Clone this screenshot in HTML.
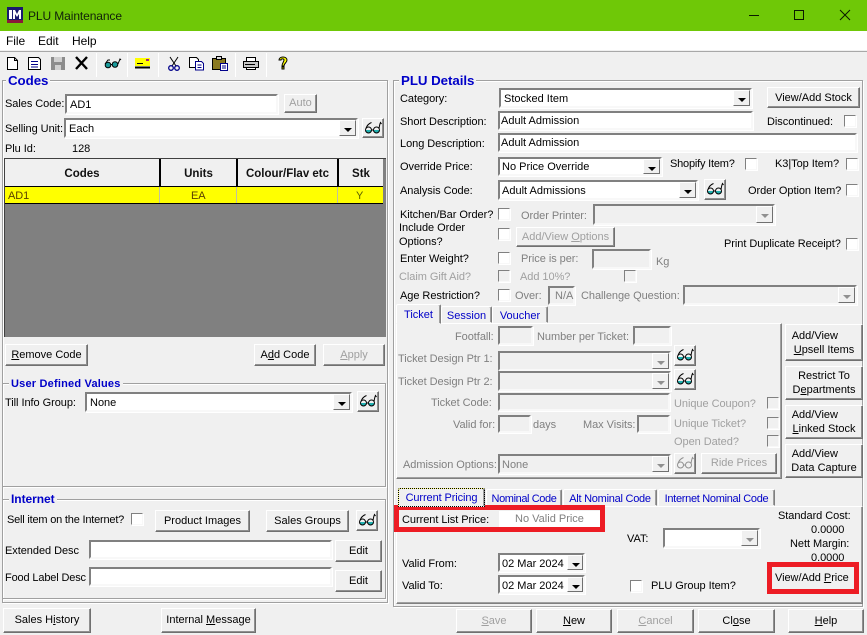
<!DOCTYPE html>
<html><head><meta charset="utf-8"><title>PLU Maintenance</title>
<style>
html,body{margin:0;padding:0}
#r{position:relative;width:867px;height:635px;overflow:hidden;background:#f0f0f0;font:11px/14px "Liberation Sans",sans-serif;color:#000}
#r *{box-sizing:border-box}
#r div,#r span.t,#r svg{position:absolute}
.t{white-space:nowrap;position:absolute;margin-top:1px;letter-spacing:-.05px}
.t.bl{margin-top:0}
.g{color:#808080}
.bl{color:#0000c8}
.i{background:#fff;border:2px solid;border-color:#808080 #f8f8f8 #f8f8f8 #808080;padding:0 0 0 3px;line-height:19px;white-space:nowrap;box-shadow:1px 1px 0 #fff}
.l17{line-height:17px}
.d{background:#f0f0f0;color:#808080}
.b{background:#f0f0f0;border:1px solid;border-color:#fff #707070 #707070 #fff;box-shadow:inset -1px -1px 0 #909090;text-align:center;white-space:nowrap}
.b u{text-underline-offset:1px}
.ar{right:0;top:0;bottom:0;width:17px;background:#f0f0f0;border:1px solid;border-color:#fff #707070 #707070 #fff}
.ar:after{content:"";position:absolute;left:4px;top:7px;border:4px solid transparent;border-top:4px solid #000;border-bottom:0}
.ar.x:after{border-top-color:#909090}
.c{width:12px;height:12px;background:#fff;border:1px solid;border-color:#808080 #f8f8f8 #f8f8f8 #808080;box-shadow:1px 1px 0 #fff}
.c.d{background:#f0f0f0}
.f{border:1px solid #a0a0a0;box-shadow:inset 1px 1px 0 #fff,1px 1px 0 #fff}
.p{background:#f0f0f0;border:1px solid;border-color:#fff #808080 #808080 #fff;box-shadow:inset -1px -1px 0 #a0a0a0}
.tb{background:#f0f0f0;border:1px solid;border-color:#fff #808080 #f0f0f0 #fff;border-radius:2px 2px 0 0;text-align:center;color:#0000c8;white-space:nowrap;box-shadow:inset -1px 0 0 #a0a0a0}
.h{font-weight:bold;text-align:center;background:#f0f0f0;color:#111;border-right:2px solid #000;top:159px;height:27px;line-height:30px;font-size:11.5px}
.s{width:1px;height:24px;top:53px;background:#a0a0a0;border-right:1px solid #fff}
.red{border:5px solid #ed1c24}
</style></head><body><div id="r">

<!-- title -->
<div style="left:0;top:0;width:867px;height:31px;background:#6fc807"></div>
<svg style="left:7px;top:7px" width="16" height="16" viewBox="0 0 16 16"><rect width="16" height="16" fill="#1a1a6e"/><rect y="13" width="16" height="3" fill="#8a1a3a"/><path d="M2 3h3v9H2zM6 12V3h2l2 4 2-4h2v9h-2V7l-2 3-2-3v5z" fill="#fff"/></svg>
<span class="t" style="left:28px;top:9px;font-size:12px;margin-top:0;letter-spacing:-.1px;color:#10210a">PLU Maintenance</span>
<svg style="left:740px;top:8px" width="120" height="16" viewBox="0 0 120 16" fill="none" stroke="#0a1a00" stroke-width="1"><path d="M9 7.500h10"/><path d="M54.500 2.500h9v9h-9z"/><path d="M100 2l10 10M110 2l-10 10"/></svg>

<!-- menu -->
<div style="left:0;top:31px;width:867px;height:19px;background:#fff"></div>
<span class="t" style="left:6px;top:33px;font-size:12px">File</span>
<span class="t" style="left:38px;top:33px;font-size:12px">Edit</span>
<span class="t" style="left:72px;top:33px;font-size:12px">Help</span>
<div style="left:0;top:51px;width:867px;height:1px;background:#a8a8a8"></div>

<!-- toolbar -->
<svg style="left:0;top:52px" width="300" height="24" viewBox="0 0 300 24" fill="none" stroke="#000">
<path d="M7.500 5.500h7l3 3v9h-10z" fill="#fff"/><path d="M14.500 5.500v3h3"/>
<path d="M28.500 5.500h10l2 2v10h-12z" fill="#fff"/><path d="M31 9.500h7M31 12.500h7M31 15h7" stroke="#00008a"/>
<path d="M51 5h14v13H51z" fill="#8c8c8c" stroke="none"/><path d="M54 5h8v5h-8z" fill="#d0d0d0" stroke="none"/><path d="M55 13h6v5h-6z" fill="#d0d0d0" stroke="none"/>
<path d="M76 5l11 12M87 5L76 17" stroke-width="2.400"/>
<circle cx="108" cy="13" r="2.800" fill="#1a9a9a"/><circle cx="115" cy="12.500" r="2.800" fill="#1a9a9a"/><path d="M105 12l3-4h2M110.500 12.500h2M118 12l2-5 1 1"/>
<path d="M135 6h15v8h-15z" fill="#ffff00" stroke="none"/><path d="M135 15.500h15" stroke-width="2"/><path d="M137 11.500h6" /><path d="M146 7h3v2h-3z" fill="#a02080" stroke="none"/>
<path d="M170 5l6 9M178 5l-6 9" stroke="#000"/><circle cx="171" cy="16" r="2.300" stroke="#00008a" stroke-width="1.300"/><circle cx="177" cy="16" r="2.300" stroke="#00008a" stroke-width="1.300"/>
<path d="M189.500 5.500h7l2 2v8h-9z" fill="#fff"/><path d="M195.500 9.500h6l2 2v6.500h-8z" fill="#fff" stroke="#00008a"/><path d="M197.500 13h4M197.500 15.500h4" stroke="#00008a"/>
<path d="M212.500 6.500h13v11h-13z" fill="#8a7a20"/><path d="M216.500 4.500h5v3h-5z" fill="#ddd"/><path d="M220.500 11.500h7v7h-7z" fill="#fff" stroke="#00008a"/><path d="M222 14h4M222 16h4" stroke="#00008a"/>
<path d="M246.500 5.500h9v4h-9z" fill="#fff"/><path d="M243.500 9.500h15v6h-15z" fill="#c8c8c8"/><path d="M246.500 15.500h9v2h-9z" fill="#fff"/><path d="M245 12.500h10"/>
<path d="M279 8c0-4 8-4 8 0 0 3-3 3-3 6h-2c0-3 2-4 2-6 0-1.500-3-1.500-3 0zM282 15h2v2h-2z" fill="#ffff00" stroke="#000" stroke-width="1"/>
</svg>
<div class="s" style="left:96px"></div><div class="s" style="left:127px"></div><div class="s" style="left:158px"></div><div class="s" style="left:235px"></div><div class="s" style="left:266px"></div>

<!-- Codes frame -->
<div class="f" style="left:2px;top:80px;width:386px;height:523px"></div>
<span class="t bl" style="left:6px;top:73px;padding:0 2px;background:#f0f0f0;font-size:13.300px;line-height:15px;font-weight:bold">Codes</span>
<span class="t" style="left:5px;top:96px">Sales Code:</span>
<div class="i" style="left:65px;top:94px;width:213px;height:20px">AD1</div>
<div class="b g" style="left:284px;top:94px;width:33px;height:19px;line-height:17px;color:#a0a0a0">Auto</div>
<span class="t" style="left:5px;top:121px">Selling Unit:</span>
<div class="i" style="left:64px;top:118px;width:294px;height:20px">Each<div class="ar"></div></div>
<div class="b" style="left:362px;top:118px;width:22px;height:20px"></div>
<span class="t" style="left:5px;top:141px">Plu Id:</span>
<span class="t" style="left:72px;top:141px">128</span>

<div style="left:4px;top:158px;width:382px;height:179px;background:#808080;border-top:1px solid #404040;border-left:1px solid #404040"></div>
<div class="h" style="left:5px;width:156px">Codes</div>
<div class="h" style="left:161px;width:77px">Units</div>
<div class="h" style="left:238px;width:101px">Colour/Flav etc</div>
<div class="h" style="left:339px;width:44px;border-right:0">Stk</div>
<div style="left:5px;top:186px;width:378px;height:1px;background:#000"></div>
<div style="left:5px;top:187px;width:378px;height:17px;background:#ffff00;border-bottom:1px solid #000"></div>
<div style="left:159px;top:187px;width:1px;height:16px;background:#c0c0a0"></div>
<div style="left:236px;top:187px;width:1px;height:16px;background:#c0c0a0"></div>
<div style="left:337px;top:187px;width:1px;height:16px;background:#c0c0a0"></div>
<span class="t" style="left:8px;top:188px;color:#5a4000">AD1</span>
<span class="t" style="left:191px;top:188px;color:#5a4000">EA</span>
<span class="t" style="left:356px;top:188px;color:#5a6000">Y</span>

<div class="b" style="left:5px;top:344px;width:83px;height:22px;line-height:20px"><u>R</u>emove Code</div>
<div class="b" style="left:254px;top:344px;width:62px;height:22px;line-height:20px">A<u>d</u>d Code</div>
<div class="b" style="left:323px;top:344px;width:62px;height:22px;line-height:20px;color:#a0a0a0"><u>A</u>pply</div>

<div class="f" style="left:2px;top:383px;width:384px;height:104px"></div>
<span class="t bl" style="left:9px;top:377px;padding:0 2px;background:#f0f0f0;font-weight:bold;letter-spacing:.2px">User Defined Values</span>
<span class="t" style="left:5px;top:395px">Till Info Group:</span>
<div class="i" style="left:85px;top:392px;width:267px;height:20px">None<div class="ar"></div></div>
<div class="b" style="left:357px;top:391px;width:22px;height:21px"></div>

<div class="f" style="left:2px;top:499px;width:384px;height:100px"></div>
<span class="t bl" style="left:9px;top:492px;padding:0 2px;background:#f0f0f0;font-weight:bold;font-size:12px">Internet</span>
<span class="t" style="left:7px;top:512px;letter-spacing:-.2px">Sell item on the Internet?</span>
<div class="c" style="left:131px;top:513px"></div>
<div class="b" style="left:155px;top:510px;width:95px;height:22px;line-height:20px">Product Images</div>
<div class="b" style="left:266px;top:510px;width:83px;height:22px;line-height:20px">Sales Groups</div>
<div class="b" style="left:356px;top:510px;width:22px;height:21px"></div>
<span class="t" style="left:5px;top:543px">Extended Desc</span>
<div class="i" style="left:89px;top:540px;width:243px;height:19px"></div>
<div class="b" style="left:335px;top:540px;width:47px;height:22px;line-height:20px">Edit</div>
<span class="t" style="left:5px;top:570px;letter-spacing:-.15px">Food Label Desc</span>
<div class="i" style="left:89px;top:567px;width:243px;height:19px"></div>
<div class="b" style="left:335px;top:570px;width:47px;height:22px;line-height:20px">Edit</div>

<div class="b" style="left:3px;top:608px;width:88px;height:25px;line-height:23px">Sales H<u>i</u>story</div>
<div class="b" style="left:161px;top:608px;width:95px;height:25px;line-height:23px">Internal <u>M</u>essage</div>

<!-- PLU Details -->
<div class="f" style="left:393px;top:80px;width:470px;height:527px"></div>
<span class="t bl" style="left:399px;top:73px;padding:0 2px;background:#f0f0f0;font-size:13.300px;line-height:15px;font-weight:bold">PLU Details</span>

<span class="t" style="left:400px;top:91px">Category:</span>
<div class="i" style="left:499px;top:88px;width:253px;height:20px">Stocked Item<div class="ar"></div></div>
<div class="b" style="left:767px;top:87px;width:93px;height:21px;line-height:20px">View/Add Stock</div>

<span class="t" style="left:400px;top:114px">Short Description:</span>
<div class="i l17" style="left:498px;top:111px;width:255px;height:19px;padding-left:1px">Adult Admission</div>
<span class="t" style="left:767px;top:114px">Discontinued:</span>
<div class="c" style="left:844px;top:115px"></div>

<span class="t" style="left:400px;top:136px">Long Description:</span>
<div class="i l17" style="left:498px;top:133px;width:359px;height:19px;padding-left:1px">Adult Admission</div>

<span class="t" style="left:400px;top:159px">Override Price:</span>
<div class="i l17" style="left:498px;top:157px;width:164px;height:19px;padding-left:2px">No Price Override<div class="ar"></div></div>
<span class="t" style="left:670px;top:156px;letter-spacing:-.2px">Shopify Item?</span>
<div class="c" style="left:745px;top:158px"></div>
<span class="t" style="left:775px;top:156px">K3|Top Item?</span>
<div class="c" style="left:846px;top:158px"></div>

<span class="t" style="left:400px;top:183px">Analysis Code:</span>
<div class="i" style="left:498px;top:180px;width:200px;height:20px;padding-left:2px">Adult Admissions<div class="ar"></div></div>
<div class="b" style="left:704px;top:179px;width:22px;height:21px"></div>
<span class="t" style="left:748px;top:183px">Order Option Item?</span>
<div class="c" style="left:846px;top:184px"></div>

<span class="t" style="left:400px;top:207px">Kitchen/Bar Order?</span>
<div class="c" style="left:498px;top:208px"></div>
<span class="t g" style="left:521px;top:208px">Order Printer:</span>
<div class="i d" style="left:593px;top:204px;width:182px;height:21px"><div class="ar x"></div></div>

<span class="t" style="left:399px;top:220px">Include Order</span>
<span class="t" style="left:399px;top:234px">Options?</span>
<div class="c" style="left:498px;top:228px"></div>
<div class="b" style="left:516px;top:227px;width:99px;height:20px;line-height:18px;color:#a0a0a0">Add/View <u>O</u>ptions</div>
<span class="t" style="left:724px;top:236px">Print Duplicate Receipt?</span>
<div class="c" style="left:846px;top:238px"></div>

<span class="t" style="left:400px;top:251px">Enter Weight?</span>
<div class="c" style="left:498px;top:252px"></div>
<span class="t g" style="left:521px;top:251px">Price is per:</span>
<div class="i d" style="left:592px;top:249px;width:59px;height:20px"></div>
<span class="t g" style="left:656px;top:254px">Kg</span>

<span class="t" style="left:399px;top:269px;color:#a0a0a0">Claim Gift Aid?</span>
<div class="c d" style="left:498px;top:270px"></div>
<span class="t" style="left:520px;top:269px;color:#a0a0a0">Add 10%?</span>
<div class="c d" style="left:624px;top:270px"></div>

<span class="t" style="left:400px;top:288px">Age Restriction?</span>
<div class="c" style="left:498px;top:289px"></div>
<span class="t g" style="left:515px;top:288px">Over:</span>
<div class="i d l17" style="left:548px;top:286px;width:27px;height:19px;padding-left:5px">N/A</div>
<span class="t g" style="left:581px;top:288px">Challenge Question:</span>
<div class="i d" style="left:683px;top:285px;width:174px;height:20px"><div class="ar x"></div></div>

<!-- ticket tabs -->
<div class="p" style="left:396px;top:323px;width:386px;height:156px"></div>
<div class="tb" style="left:396px;top:304px;width:45px;height:20px;line-height:20px;z-index:2">Ticket</div>
<div class="tb" style="left:441px;top:306px;width:51px;height:17px;line-height:18px">Session</div>
<div class="tb" style="left:492px;top:306px;width:56px;height:17px;line-height:18px">Voucher</div>

<span class="t g" style="left:455px;top:329px">Footfall:</span>
<div class="i d" style="left:498px;top:326px;width:35px;height:19px"></div>
<span class="t g" style="left:537px;top:329px">Number per Ticket:</span>
<div class="i d" style="left:633px;top:326px;width:38px;height:19px"></div>
<span class="t g" style="left:398px;top:351px">Ticket Design Ptr 1:</span>
<div class="i d" style="left:498px;top:351px;width:173px;height:20px"><div class="ar x"></div></div>
<div class="b" style="left:674px;top:345px;width:22px;height:21px"></div>
<span class="t g" style="left:398px;top:374px">Ticket Design Ptr 2:</span>
<div class="i d" style="left:498px;top:371px;width:173px;height:20px"><div class="ar x"></div></div>
<div class="b" style="left:674px;top:369px;width:22px;height:21px"></div>
<span class="t g" style="left:431px;top:395px">Ticket Code:</span>
<div class="i d" style="left:498px;top:393px;width:172px;height:18px"></div>
<span class="t g" style="left:453px;top:417px">Valid for:</span>
<div class="i d" style="left:498px;top:415px;width:33px;height:18px"></div>
<span class="t g" style="left:533px;top:417px">days</span>
<span class="t g" style="left:583px;top:417px">Max Visits:</span>
<div class="i d" style="left:637px;top:415px;width:33px;height:18px"></div>
<span class="t" style="left:674px;top:396px;color:#a0a0a0">Unique Coupon?</span>
<div class="c d" style="left:767px;top:397px"></div>
<span class="t" style="left:674px;top:416px;color:#a0a0a0">Unique Ticket?</span>
<div class="c d" style="left:767px;top:417px"></div>
<span class="t" style="left:674px;top:434px;color:#a0a0a0">Open Dated?</span>
<div class="c d" style="left:767px;top:435px"></div>
<span class="t g" style="left:403px;top:457px">Admission Options:</span>
<div class="i d" style="left:498px;top:454px;width:173px;height:20px;padding-left:2px">None<div class="ar x"></div></div>
<div class="b" style="left:674px;top:453px;width:22px;height:21px"></div>
<div class="b" style="left:701px;top:453px;width:76px;height:21px;line-height:19px;color:#a0a0a0">Ride Prices</div>

<div class="b" style="left:785px;top:324px;width:78px;height:37px;line-height:14px;padding-top:4px">Add/View&nbsp;&nbsp;&nbsp;&nbsp;&nbsp;&nbsp;<br><u>U</u>psell Items</div>
<div class="b" style="left:785px;top:366px;width:78px;height:34px;line-height:14px;padding-top:2px">Restrict To<br>D<u>e</u>partments</div>
<div class="b" style="left:785px;top:405px;width:78px;height:34px;line-height:14px;padding-top:2px">Add/View&nbsp;&nbsp;&nbsp;&nbsp;&nbsp;&nbsp;<br><u>L</u>inked Stock</div>
<div class="b" style="left:785px;top:444px;width:78px;height:34px;line-height:14px;padding-top:2px">Add/View&nbsp;&nbsp;&nbsp;&nbsp;&nbsp;&nbsp;<br>Data Capture</div>

<!-- pricing -->
<div class="p" style="left:396px;top:506px;width:467px;height:98px"></div>
<div class="tb" style="left:398px;top:488px;width:87px;height:19px;line-height:18px;letter-spacing:-.1px;z-index:2;outline:1px dotted #000;outline-offset:-1px;border-color:#ffff80 #808080 #f0f0f0 #ffff80">Current Pricing</div>
<div class="tb" style="left:486px;top:489px;width:76px;height:17px;line-height:19px;letter-spacing:-.4px">Nominal Code</div>
<div class="tb" style="left:563px;top:489px;width:94px;height:17px;line-height:19px;letter-spacing:-.25px">Alt Nominal Code</div>
<div class="tb" style="left:658px;top:489px;width:117px;height:17px;line-height:19px;letter-spacing:-.3px">Internet Nominal Code</div>

<div class="red" style="left:394px;top:505px;width:211px;height:27px"></div>
<span class="t" style="left:402px;top:512px">Current List Price:</span>
<div style="left:499px;top:511px;width:101px;height:16px;background:#fff;text-align:center;line-height:17px;color:#808080">No Valid Price</div>

<span class="t" style="left:627px;top:531px">VAT:</span>
<div class="i" style="left:663px;top:528px;width:97px;height:20px"><div class="ar x"></div></div>
<span class="t" style="left:778px;top:508px">Standard Cost:</span>
<span class="t" style="left:811px;top:522px">0.0000</span>
<span class="t" style="left:790px;top:536px">Nett Margin:</span>
<span class="t" style="left:811px;top:550px">0.0000</span>

<span class="t" style="left:402px;top:556px">Valid From:</span>
<div class="i" style="left:498px;top:553px;width:87px;height:19px;padding-left:2px;line-height:19px">02 Mar 2024<div class="ar" style="width:16px"></div></div>
<span class="t" style="left:402px;top:578px">Valid To:</span>
<div class="i" style="left:498px;top:575px;width:87px;height:19px;padding-left:2px;line-height:19px">02 Mar 2024<div class="ar" style="width:16px"></div></div>
<div class="c" style="left:630px;top:580px"></div>
<span class="t" style="left:651px;top:578px">PLU Group Item?</span>

<div class="red" style="left:767px;top:562px;width:92px;height:32px"></div>
<span class="t" style="left:775px;top:570px">View/Add <u>P</u>rice</span>

<div class="b" style="left:456px;top:609px;width:76px;height:24px;line-height:22px;color:#a0a0a0"><u>S</u>ave</div>
<div class="b" style="left:536px;top:609px;width:76px;height:24px;line-height:22px"><u>N</u>ew</div>
<div class="b" style="left:617px;top:609px;width:77px;height:24px;line-height:22px;color:#a0a0a0"><u>C</u>ancel</div>
<div class="b" style="left:698px;top:609px;width:77px;height:24px;line-height:22px">Cl<u>o</u>se</div>
<div class="b" style="left:788px;top:609px;width:76px;height:24px;line-height:22px"><u>H</u>elp</div>

<!-- glasses icons -->
<svg style="left:364px;top:121px" width="18" height="14" viewBox="0 0 18 14" fill="none" stroke="#000"><path d="M1.500 9a3 3 0 0 0 6 0zM9.500 9a3 3 0 0 0 6 0z" fill="#20b0b0" stroke="none"/><circle cx="4.500" cy="9" r="3"/><circle cx="12.500" cy="9" r="3"/><path d="M2 7.500C3 4 5 2.500 7.500 1.500M7.500 9h2M15 7.500c.5-3 1-5 1.500-6l1 1.500"/></svg>
<svg style="left:359px;top:394px" width="18" height="14" viewBox="0 0 18 14" fill="none" stroke="#000"><path d="M1.500 9a3 3 0 0 0 6 0zM9.500 9a3 3 0 0 0 6 0z" fill="#20b0b0" stroke="none"/><circle cx="4.500" cy="9" r="3"/><circle cx="12.500" cy="9" r="3"/><path d="M2 7.500C3 4 5 2.500 7.500 1.500M7.500 9h2M15 7.500c.5-3 1-5 1.500-6l1 1.500"/></svg>
<svg style="left:358px;top:513px" width="18" height="14" viewBox="0 0 18 14" fill="none" stroke="#000"><path d="M1.500 9a3 3 0 0 0 6 0zM9.500 9a3 3 0 0 0 6 0z" fill="#20b0b0" stroke="none"/><circle cx="4.500" cy="9" r="3"/><circle cx="12.500" cy="9" r="3"/><path d="M2 7.500C3 4 5 2.500 7.500 1.500M7.500 9h2M15 7.500c.5-3 1-5 1.500-6l1 1.500"/></svg>
<svg style="left:706px;top:182px" width="18" height="14" viewBox="0 0 18 14" fill="none" stroke="#000"><path d="M1.500 9a3 3 0 0 0 6 0zM9.500 9a3 3 0 0 0 6 0z" fill="#20b0b0" stroke="none"/><circle cx="4.500" cy="9" r="3"/><circle cx="12.500" cy="9" r="3"/><path d="M2 7.500C3 4 5 2.500 7.500 1.500M7.500 9h2M15 7.500c.5-3 1-5 1.500-6l1 1.500"/></svg>
<svg style="left:676px;top:348px" width="18" height="14" viewBox="0 0 18 14" fill="none" stroke="#000"><path d="M1.500 9a3 3 0 0 0 6 0zM9.500 9a3 3 0 0 0 6 0z" fill="#20b0b0" stroke="none"/><circle cx="4.500" cy="9" r="3"/><circle cx="12.500" cy="9" r="3"/><path d="M2 7.500C3 4 5 2.500 7.500 1.500M7.500 9h2M15 7.500c.5-3 1-5 1.500-6l1 1.500"/></svg>
<svg style="left:676px;top:372px" width="18" height="14" viewBox="0 0 18 14" fill="none" stroke="#000"><path d="M1.500 9a3 3 0 0 0 6 0zM9.500 9a3 3 0 0 0 6 0z" fill="#20b0b0" stroke="none"/><circle cx="4.500" cy="9" r="3"/><circle cx="12.500" cy="9" r="3"/><path d="M2 7.500C3 4 5 2.500 7.500 1.500M7.500 9h2M15 7.500c.5-3 1-5 1.500-6l1 1.500"/></svg>
<svg style="left:676px;top:456px" width="18" height="14" viewBox="0 0 18 14" fill="none" stroke="#909090"><circle cx="4.500" cy="9" r="3"/><circle cx="12.500" cy="9" r="3"/><path d="M2 7.500C3 4 5 2.500 7.500 1.500M7.500 9h2M15 7.500c.5-3 1-5 1.500-6l1 1.500"/></svg>

</div></body></html>
